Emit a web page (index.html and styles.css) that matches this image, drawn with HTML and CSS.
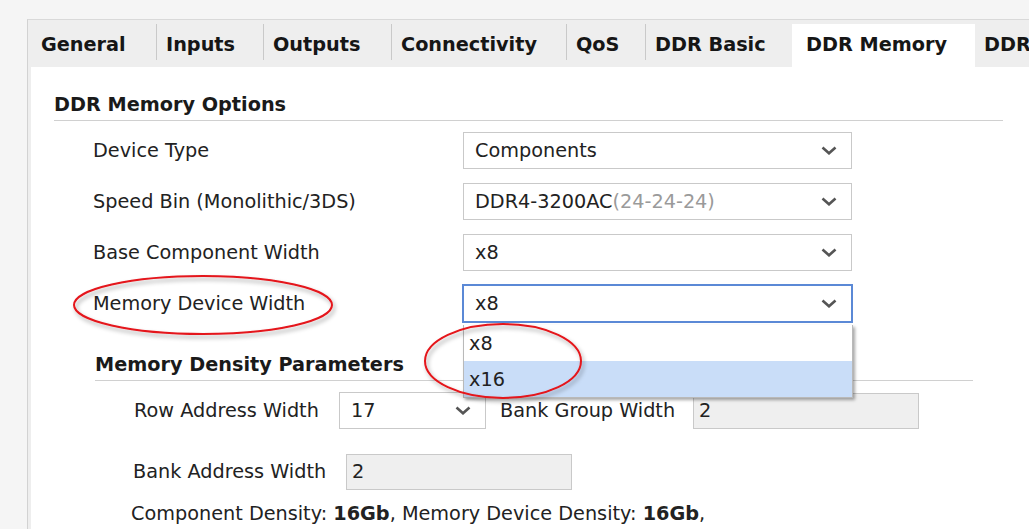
FILE: index.html
```html
<!DOCTYPE html>
<html>
<head>
<meta charset="utf-8">
<link rel="stylesheet" href="styles.css">
</head>
<body>
<div class="panel">
  <div class="tabbar">
    <div class="tab first tab-general">General</div>
    <div class="tab tab-inputs">Inputs</div>
    <div class="tab tab-outputs">Outputs</div>
    <div class="tab tab-conn">Connectivity</div>
    <div class="tab tab-qos">QoS</div>
    <div class="tab tab-basic">DDR Basic</div>
    <div class="tab active tab-memory">DDR Memory</div>
    <div class="tab next">DDR Options</div>
  </div>
  <div class="content">
    <div class="section">
      <div class="section-title">DDR Memory Options</div>
      <div class="form">
        <div class="row">
          <span class="label">Device Type</span>
          <div class="select"><span class="value">Components</span><svg class="chev" width="16" height="9" viewBox="0 0 16 9"><path d="M1.5 1.5 L8 7.3 L14.5 1.5" fill="none" stroke="#555" stroke-width="2.6"/></svg></div>
        </div>
        <div class="row">
          <span class="label">Speed Bin (Monolithic/3DS)</span>
          <div class="select"><span class="value">DDR4-3200AC<span class="muted">(24-24-24)</span></span><svg class="chev" width="16" height="9" viewBox="0 0 16 9"><path d="M1.5 1.5 L8 7.3 L14.5 1.5" fill="none" stroke="#555" stroke-width="2.6"/></svg></div>
        </div>
        <div class="row">
          <span class="label">Base Component Width</span>
          <div class="select"><span class="value">x8</span><svg class="chev" width="16" height="9" viewBox="0 0 16 9"><path d="M1.5 1.5 L8 7.3 L14.5 1.5" fill="none" stroke="#555" stroke-width="2.6"/></svg></div>
        </div>
        <div class="row">
          <span class="label">Memory Device Width</span>
          <div class="select focused"><span class="value">x8</span><svg class="chev" width="16" height="9" viewBox="0 0 16 9"><path d="M1.5 1.5 L8 7.3 L14.5 1.5" fill="none" stroke="#555" stroke-width="2.6"/></svg>
            <div class="popup">
              <div class="option">x8</div>
              <div class="option selected">x16</div>
            </div>
          </div>
        </div>
      </div>
      <div class="subsection">
        <div class="section-title">Memory Density Parameters</div>
        <div class="subform">
          <div class="subrow">
            <span class="label row-label">Row Address Width</span>
            <div class="select small"><span class="value">17</span><svg class="chev" width="16" height="9" viewBox="0 0 16 9"><path d="M1.5 1.5 L8 7.3 L14.5 1.5" fill="none" stroke="#555" stroke-width="2.6"/></svg></div>
            <span class="label group-label">Bank Group Width</span>
            <div class="field">2</div>
          </div>
          <div class="subrow">
            <span class="label bank-label">Bank Address Width</span>
            <div class="field">2</div>
          </div>
          <div class="summary">Component Density: <b>16Gb</b>, Memory Device Density: <b>16Gb</b>,</div>
        </div>
      </div>
    </div>
  </div>
</div>
<svg class="annot" width="1029" height="529" viewBox="0 0 1029 529">
  <defs>
    <filter id="sh" x="-20%" y="-20%" width="140%" height="140%">
      <feDropShadow dx="2" dy="3" stdDeviation="2" flood-color="#000" flood-opacity="0.35"/>
    </filter>
  </defs>
  <ellipse cx="203" cy="305" rx="129" ry="29" fill="none" stroke="#e4141a" stroke-width="2" filter="url(#sh)"/>
  <ellipse cx="503" cy="361" rx="78" ry="37" fill="none" stroke="#e4141a" stroke-width="2" filter="url(#sh)"/>
</svg>
</body>
</html>
```

FILE: styles.css
```css
* { box-sizing: border-box; }

html, body {
  margin: 0;
  height: 529px;
  overflow: hidden;
}

body {
  background: #f5f5f5;
  font-family: "DejaVu Sans", sans-serif;
  font-size: 19.25px;
  color: #222;
  position: relative;
}

.panel {
  margin: 19px 0 0 27px;
  border-top: 1px solid #d9d9d9;
  border-left: 1px solid #d2d2d2;
  padding-left: 3px;
  background: #eeeeee;
  height: 510px;
}

.tabbar {
  display: flex;
  height: 47px;
  align-items: flex-end;
  background: #eeeeee;
  overflow: hidden;
  white-space: nowrap;
}

.tab {
  flex: none;
  height: 43px;
  display: flex;
  align-items: center;
  padding: 0 0 3px 10px;
  font-weight: bold;
  color: #161616;
  background: linear-gradient(#c9c9c9, #c9c9c9) left top / 1px 36px no-repeat;
}

.tab-general { width: 125px; }
.tab-inputs { width: 107px; }
.tab-outputs { width: 128px; }
.tab-conn { width: 175px; }
.tab-qos { width: 79px; }
.tab-basic { width: 147px; }
.tab-memory { width: 183px; }

.tab.first { background-image: none; }

.tab.active {
  background: #ffffff;
  padding-left: 14px;
}

.tab.next {
  background-image: none;
  padding-left: 9px;
}

.content {
  background: #ffffff;
  height: 463px;
  padding: 27px 0 0 23px;
}

.section { width: 949px; }

.section-title {
  font-weight: bold;
  line-height: 22px;
  padding-bottom: 4px;
  border-bottom: 1px solid #d0d0d0;
  color: #1a1a1a;
}

.form {
  margin-top: 11px;
  padding-left: 39px;
  display: flex;
  flex-direction: column;
  gap: 14px;
}

.row {
  display: flex;
  align-items: center;
  height: 37px;
}

.row .label { width: 370px; }

.label { line-height: 22px; white-space: nowrap; }

.select {
  width: 389px;
  height: 37px;
  border: 1px solid #c9c9c9;
  background: #fff;
  display: flex;
  align-items: center;
  justify-content: space-between;
  padding: 0 14px 0 11px;
  position: relative;
}

.select.small { width: 147px; }

.select.focused {
  border-color: #5b89d6;
  box-shadow: 0 0 0 1px #5b89d6;
}

.muted { color: #9a9a9a; }

.chev { display: block; flex: none; }

.popup {
  position: absolute;
  top: 39px;
  left: -1px;
  right: -2px;
  background: #fff;
  border: 1px solid #b9b9b9;
  border-top: none;
  box-shadow: 2px 2px 3px rgba(0, 0, 0, 0.35);
  z-index: 2;
}

.option {
  height: 36px;
  display: flex;
  align-items: center;
  padding-left: 5px;
}

.option.selected { background: #c9ddf8; }

.subsection {
  margin: 32px 0 0 41px;
  width: 878px;
}

.subform {
  padding-left: 39px;
}

.subrow {
  display: flex;
  align-items: center;
  height: 37px;
  margin-top: 11px;
}

.subrow + .subrow { margin-top: 24px; }

.row-label { width: 205px; }
.group-label { width: 193px; margin-left: 14px; }
.bank-label { width: 213px; margin-left: -1px; }

.field {
  width: 226px;
  height: 36px;
  background: #efefef;
  border: 1px solid #c9c9c9;
  display: flex;
  align-items: center;
  padding-left: 5px;
}

.summary {
  margin: 13px 0 0 -3px;
  line-height: 22px;
  white-space: nowrap;
}

.annot {
  position: absolute;
  top: 0;
  left: 0;
  pointer-events: none;
  z-index: 5;
}
```
